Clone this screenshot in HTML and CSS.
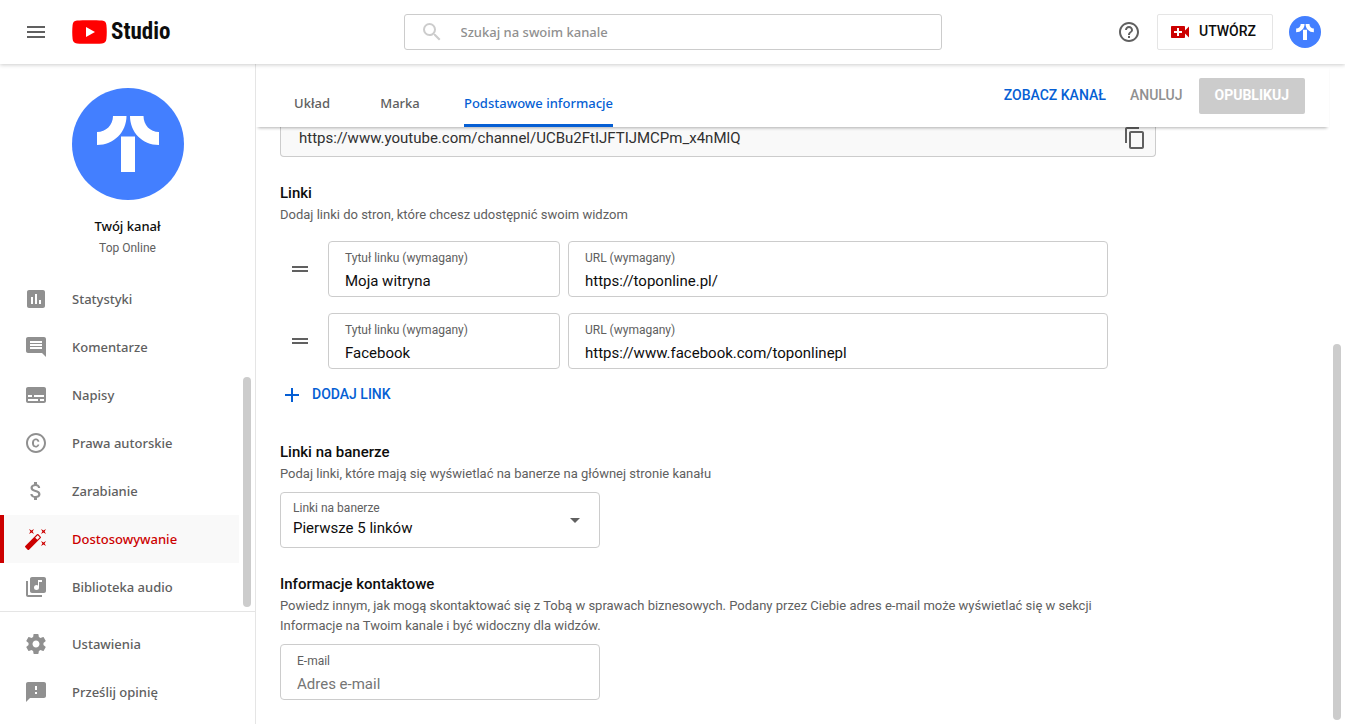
FILE: index.html
```html
<!DOCTYPE html>
<html lang="pl">
<head>
<meta charset="utf-8">
<meta name="viewport" content="width=device-width, initial-scale=1">
<title>Dostosowywanie kanału - YouTube Studio</title>
<link rel="stylesheet" href="styles.css">
</head>
<body>
<svg class="defs" aria-hidden="true">
  <symbol id="channel-logo" viewBox="0 0 112 112">
    <circle cx="56" cy="56" r="56" fill="#437fff"/>
    <path fill="#fff" d="M41 28h13.500C54.500 44 42 57 25 57V44C34 44 41 37 41 28zM58 28h13.500C71.500 37 78 44 87 44V57C70 57 58 44 58 28zM49 48.500h14V84H49z"/>
  </symbol>
</svg>

<header class="topbar">
  <div class="topbar-start">
    <button class="icon-button" type="button" aria-label="Menu">
      <svg class="icon" viewBox="0 0 24 24"><path d="M3 18h18v-2H3v2zm0-5h18v-2H3v2zm0-7v2h18V6H3z"/></svg>
    </button>
    <a class="brand" href="#" aria-label="YouTube Studio">
      <svg class="brand-mark" viewBox="0 0 35 24"><path fill="#f00" d="M5 .6C11 0 24 0 30 .6c3 .3 4.100 1.800 4.400 4.400.5 4.400.5 9.600 0 14-.3 2.600-1.400 4.100-4.400 4.400-6 .6-19 .6-25 0C2 23.100.9 21.600.6 19 .1 14.600.1 9.400.6 5 .9 2.400 2 .9 5 .6z"/><path fill="#fff" d="M14 7v10l9-5z"/></svg>
      <span class="brand-name">Studio</span>
    </a>
  </div>
  <form class="search">
    <svg class="icon" viewBox="0 0 24 24"><path d="M15.500 14h-.79l-.28-.27A6.470 6.470 0 0 0 16 9.500 6.500 6.500 0 1 0 9.500 16c1.610 0 3.090-.59 4.230-1.570l.27.28v.79l5 4.990L20.490 19l-4.990-5zm-6 0C7.010 14 5 11.990 5 9.500S7.010 5 9.500 5 14 7.010 14 9.500 11.990 14 9.500 14z"/></svg>
    <input type="search" aria-label="Szukaj na swoim kanale" placeholder="Szukaj na swoim kanale">
  </form>
  <div class="topbar-end">
    <button class="icon-button" type="button" aria-label="Pomoc">
      <svg class="icon" viewBox="0 0 24 24"><path d="M11 18h2v-2h-2v2zm1-16C6.480 2 2 6.480 2 12s4.480 10 10 10 10-4.480 10-10S17.520 2 12 2zm0 18c-4.410 0-8-3.590-8-8s3.590-8 8-8 8 3.590 8 8-3.590 8-8 8zm0-14c-2.210 0-4 1.790-4 4h2c0-1.100.9-2 2-2s2 .9 2 2c0 2-3 1.750-3 5h2c0-2.250 3-2.500 3-5 0-2.210-1.790-4-4-4z"/></svg>
    </button>
    <button class="create" type="button">
      <svg class="icon" viewBox="0 0 24 24"><path d="M17 10.500V7c0-.55-.45-1-1-1H4c-.55 0-1 .45-1 1v10c0 .55.450 1 1 1h12c.55 0 1-.45 1-1v-3.500l4 4v-11l-4 4zM14 13h-3v3H9v-3H6v-2h3V8h2v3h3v2z"/></svg>
      <span>UTWÓRZ</span>
    </button>
    <button class="icon-button" type="button" aria-label="Konto">
      <svg class="account"><use href="#channel-logo"/></svg>
    </button>
  </div>
</header>

<div class="layout">
  <aside class="sidebar">
    <div class="sidebar-scroll">
      <div class="channel">
        <svg class="channel-avatar" aria-hidden="true"><use href="#channel-logo"/></svg>
        <div class="channel-title">Twój kanał</div>
        <div class="channel-name">Top Online</div>
      </div>
      <nav class="menu" aria-label="Studio">
        <a class="menu-item" href="#"><svg class="icon" viewBox="0 0 24 24"><path d="M19 3H5c-1.100 0-2 .9-2 2v14c0 1.100.9 2 2 2h14c1.100 0 2-.9 2-2V5c0-1.100-.9-2-2-2zM9 17H7v-7h2v7zm4 0h-2V7h2v10zm4 0h-2v-4h2v4z"/></svg>Statystyki</a>
        <a class="menu-item" href="#"><svg class="icon" viewBox="0 0 24 24"><path d="M21.990 4c0-1.100-.89-2-1.990-2H4c-1.100 0-2 .9-2 2v12c0 1.100.9 2 2 2h14l4 4-.01-18zM18 14H6v-2h12v2zm0-3H6V9h12v2zm0-3H6V6h12v2z"/></svg>Komentarze</a>
        <a class="menu-item" href="#"><svg class="icon" viewBox="0 0 24 24"><path d="M20 4H4c-1.100 0-2 .9-2 2v12c0 1.100.9 2 2 2h16c1.100 0 2-.9 2-2V6c0-1.100-.9-2-2-2zM4 12h4v2H4v-2zm10 6H4v-2h10v2zm6 0h-4v-2h4v2zm0-4H10v-2h10v2z"/></svg>Napisy</a>
        <a class="menu-item" href="#"><svg class="icon" viewBox="0 0 24 24"><path d="M10.080 10.860c.05-.33.160-.62.300-.87s.34-.46.590-.62c.24-.15.540-.22.910-.23.230.010.440.050.630.130.2.090.380.210.520.360s.25.330.340.530.130.420.140.640h1.790c-.02-.47-.11-.9-.28-1.290s-.4-.73-.7-1.010-.66-.5-1.080-.66-.88-.23-1.390-.23c-.65 0-1.220.110-1.700.340s-.88.530-1.200.920-.56.840-.71 1.360S8 11.290 8 11.870v.27c0 .58.080 1.120.230 1.640s.39.970.710 1.350.72.690 1.200.910 1.050.340 1.700.340c.47 0 .91-.08 1.320-.23s.77-.36 1.080-.63.560-.58.740-.94.290-.74.300-1.150h-1.790c-.01.210-.06.400-.15.580s-.21.330-.36.460-.32.230-.52.300c-.19.070-.39.090-.6.100-.36-.01-.66-.08-.89-.23-.25-.16-.45-.37-.59-.62s-.25-.55-.3-.88-.08-.67-.08-1v-.27c0-.35.030-.68.080-1.010zM12 2C6.480 2 2 6.480 2 12s4.480 10 10 10 10-4.480 10-10S17.520 2 12 2zm0 18c-4.410 0-8-3.590-8-8s3.590-8 8-8 8 3.590 8 8-3.590 8-8 8z"/></svg>Prawa autorskie</a>
        <a class="menu-item" href="#"><svg class="icon" viewBox="0 0 24 24"><path d="M11.800 10.900c-2.270-.59-3-1.200-3-2.150 0-1.090 1.010-1.850 2.700-1.850 1.780 0 2.440.85 2.500 2.100h2.210c-.07-1.720-1.120-3.300-3.210-3.810V3h-3v2.160c-1.940.42-3.500 1.680-3.500 3.610 0 2.310 1.910 3.460 4.700 4.130 2.500.6 3 1.480 3 2.410 0 .69-.49 1.790-2.700 1.790-2.060 0-2.870-.92-2.980-2.100h-2.200c.12 2.190 1.760 3.420 3.680 3.830V21h3v-2.150c1.950-.37 3.500-1.500 3.500-3.550 0-2.840-2.430-3.810-4.700-4.400z"/></svg>Zarabianie</a>
        <a class="menu-item is-active" href="#" aria-current="page"><svg class="icon" viewBox="0 0 24 24"><path d="M7.500 5.600L10 7 8.600 4.500 10 2 7.500 3.400 5 2l1.400 2.500L5 7zm12 9.800L17 14l1.400 2.500L17 19l2.500-1.400L22 19l-1.400-2.500L22 14zM22 2l-2.500 1.400L17 2l1.400 2.500L17 7l2.500-1.400L22 7l-1.400-2.500zm-7.630 5.290a.996.996 0 0 0-1.410 0L1.290 18.960a.996.996 0 0 0 0 1.410l2.340 2.340c.39.390 1.020.390 1.410 0L16.700 11.050a.996.996 0 0 0 0-1.410l-2.330-2.350zm-1.030 5.490l-2.120-2.120 2.440-2.440 2.120 2.120-2.440 2.440z"/></svg>Dostosowywanie</a>
        <a class="menu-item" href="#"><svg class="icon" viewBox="0 0 24 24"><path d="M20 2H8c-1.100 0-2 .9-2 2v12c0 1.100.9 2 2 2h12c1.100 0 2-.9 2-2V4c0-1.100-.9-2-2-2zm-2 5h-3v5.500a2.500 2.500 0 1 1-2.500-2.500c.57 0 1.080.19 1.500.51V5h4v2zM4 6H2v14c0 1.100.9 2 2 2h14v-2H4V6z"/></svg>Biblioteka audio</a>
      </nav>
      <div class="thumb sidebar-thumb"></div>
    </div>
    <nav class="menu menu-footer" aria-label="Pomoc i ustawienia">
      <a class="menu-item" href="#"><svg class="icon" viewBox="0 0 24 24"><path d="M19.430 12.980c.04-.32.070-.64.070-.98s-.03-.66-.07-.98l2.110-1.650c.19-.15.240-.42.120-.64l-2-3.460c-.12-.22-.39-.3-.61-.22l-2.490 1c-.52-.4-1.080-.73-1.690-.98l-.38-2.650A.488.488 0 0 0 14 2h-4c-.25 0-.46.180-.49.420l-.38 2.650c-.61.250-1.170.590-1.690.980l-2.490-1c-.23-.09-.49 0-.61.220l-2 3.460c-.13.220-.07.490.12.640l2.110 1.650c-.04.320-.07.650-.07.980s.03.660.07.980l-2.110 1.650c-.19.150-.24.420-.12.640l2 3.460c.12.220.39.300.61.220l2.490-1c.52.400 1.080.730 1.690.980l.38 2.650c.03.240.24.420.49.420h4c.25 0 .46-.18.490-.42l.38-2.650c.61-.25 1.170-.59 1.690-.98l2.490 1c.23.090.49 0 .61-.22l2-3.460c.12-.22.070-.49-.12-.64l-2.110-1.650zM12 15.500c-1.930 0-3.500-1.570-3.500-3.500s1.570-3.500 3.500-3.500 3.500 1.570 3.500 3.500-1.570 3.500-3.500 3.500z"/></svg>Ustawienia</a>
      <a class="menu-item" href="#"><svg class="icon" viewBox="0 0 24 24"><path d="M20 2H4c-1.100 0-2 .9-2 2v18l4-4h14c1.100 0 2-.9 2-2V4c0-1.100-.9-2-2-2zm-7 12h-2v-2h2v2zm0-4h-2V6h2v4z"/></svg>Prześlij opinię</a>
    </nav>
  </aside>

  <main class="main">
    <div class="page-header">
      <nav class="tabs" aria-label="Sekcje">
        <a class="tab" href="#"><span>Układ</span></a>
        <a class="tab" href="#"><span>Marka</span></a>
        <a class="tab is-active" href="#" aria-current="page"><span>Podstawowe informacje</span></a>
      </nav>
      <div class="actions">
        <a class="action-link" href="#">ZOBACZ KANAŁ</a>
        <button class="cancel" type="button" disabled>ANULUJ</button>
        <button class="publish" type="button" disabled>OPUBLIKUJ</button>
      </div>
    </div>

    <form class="content">
      <div class="url-box">
        <input type="text" readonly aria-label="Adres URL kanału" value="https://www.youtube.com/channel/UCBu2FtIJFTIJMCPm_x4nMlQ">
        <button class="icon-button" type="button" aria-label="Kopiuj">
          <svg class="icon" viewBox="0 0 24 24"><path d="M16 1H4c-1.100 0-2 .9-2 2v14h2V3h12V1zm3 4H8c-1.100 0-2 .9-2 2v14c0 1.100.9 2 2 2h11c1.100 0 2-.9 2-2V7c0-1.100-.9-2-2-2zm0 16H8V7h11v14z"/></svg>
        </button>
      </div>

      <section class="section">
        <h2>Linki</h2>
        <p>Dodaj linki do stron, które chcesz udostępnić swoim widzom</p>
        <div class="links">
          <div class="link-row">
            <svg class="icon" viewBox="0 0 24 24"><path d="M20 9H4v2h16V9zM4 15h16v-2H4v2z"/></svg>
            <div class="field"><label for="title-1">Tytuł linku (wymagany)</label><input id="title-1" type="text" value="Moja witryna"></div>
            <div class="field"><label for="url-1">URL (wymagany)</label><input id="url-1" type="text" value="https://toponline.pl/"></div>
          </div>
          <div class="link-row">
            <svg class="icon" viewBox="0 0 24 24"><path d="M20 9H4v2h16V9zM4 15h16v-2H4v2z"/></svg>
            <div class="field"><label for="title-2">Tytuł linku (wymagany)</label><input id="title-2" type="text" value="Facebook"></div>
            <div class="field"><label for="url-2">URL (wymagany)</label><input id="url-2" type="text" value="https://www.facebook.com/toponlinepl"></div>
          </div>
        </div>
        <button class="add-link" type="button">
          <svg class="icon" viewBox="0 0 24 24"><path d="M19 13h-6v6h-2v-6H5v-2h6V5h2v6h6v2z"/></svg>
          <span>DODAJ LINK</span>
        </button>
      </section>

      <section class="section">
        <h2>Linki na banerze</h2>
        <p>Podaj linki, które mają się wyświetlać na banerze na głównej stronie kanału</p>
        <div class="field select-field">
          <label for="banner">Linki na banerze</label>
          <select id="banner"><option>Pierwsze 5 linków</option></select>
          <svg class="icon" viewBox="0 0 24 24"><path d="M7 10l5 5 5-5z"/></svg>
        </div>
      </section>

      <section class="section">
        <h2>Informacje kontaktowe</h2>
        <p>Powiedz innym, jak mogą skontaktować się z Tobą w sprawach biznesowych. Podany przez Ciebie adres e-mail może wyświetlać się w sekcji Informacje na Twoim kanale i być widoczny dla widzów.</p>
        <div class="field email-field"><label for="email">E-mail</label><input id="email" type="email" placeholder="Adres e-mail"></div>
      </section>
    </form>
    <div class="thumb main-thumb"></div>
  </main>
</div>
</body>
</html>
```
FILE: styles.css
```css
* { box-sizing: border-box; }

body {
  margin: 0;
  height: 100vh;
  display: flex;
  flex-direction: column;
  overflow: hidden;
  background: #fff;
  color: #0d0d0d;
  font: 14px/20px Roboto, sans-serif;
}

button, input, select {
  margin: 0;
  padding: 0;
  border: 0;
  outline: 0;
  background: none;
  color: inherit;
  font: inherit;
}

a { color: inherit; text-decoration: none; }

.defs { position: absolute; width: 0; height: 0; }

.icon {
  display: block;
  flex: none;
  width: 24px;
  height: 24px;
  fill: currentColor;
}

.icon-button { display: block; flex: none; color: #606060; }

/* Top bar */
.topbar {
  position: relative;
  z-index: 3;
  flex: none;
  display: grid;
  grid-template-columns: 1fr 40% 1fr;
  align-items: center;
  height: 64px;
  background: #fff;
  box-shadow: 0 1px 4px rgba(0, 0, 0, 0.2);
}

.topbar-start { display: flex; align-items: center; gap: 24px; padding-left: 24px; }

.brand { display: flex; align-items: center; gap: 4px; }
.brand-mark { width: 35px; height: 24px; }
.brand-name {
  font: bold 23px/32px "Liberation Sans Narrow", "Arial Narrow", "Roboto Condensed", "Open Sans Condensed", "Liberation Sans", sans-serif;
}

.search {
  display: flex;
  align-items: center;
  height: 36px;
  padding-left: 15px;
  gap: 17px;
  border: 1px solid #ccc;
  border-radius: 3px;
  color: #ccc;
}
.search input {
  flex: 1;
  min-width: 0;
  font: 500 13px/20px "Noto Sans", sans-serif;
  color: #0d0d0d;
}
.search input::placeholder { color: #909090; opacity: 1; }

.topbar-end {
  display: flex;
  align-items: center;
  justify-content: flex-end;
  gap: 16px;
  padding-right: 24px;
}
.account { display: block; width: 32px; height: 32px; }

.create {
  display: flex;
  align-items: center;
  gap: 7px;
  height: 36px;
  padding: 0 16px 0 10px;
  border: 1px solid #e5e5e5;
  border-radius: 2px;
  font-weight: 500;
}
.create .icon { color: #c00; }
.create span, .add-link span { padding-bottom: 2px; }

/* Sidebar */
.layout { flex: 1; display: flex; min-height: 0; }

.sidebar {
  flex: none;
  display: flex;
  flex-direction: column;
  width: 256px;
  border-right: 1px solid #e5e5e5;
}
.sidebar-scroll { position: relative; flex: 1; min-height: 0; overflow: hidden; }

.channel { padding: 24px 0 15px; text-align: center; }
.channel-avatar { display: block; width: 112px; height: 112px; margin: 0 auto 16px; }
.channel-title { font: 500 13px/20px "Noto Sans", sans-serif; }
.channel-name { font-size: 12px; line-height: 24px; color: #606060; }

.menu-item {
  display: flex;
  align-items: center;
  gap: 24px;
  height: 48px;
  margin-right: 16px;
  padding-left: 24px;
  color: #606060;
  font: 500 13px/20px "Noto Sans", sans-serif;
}
.menu-item .icon { color: #909090; }
.menu-item.is-active {
  padding-left: 20px;
  border-left: 4px solid #c00;
  background: #f9f9f9;
  color: #c00;
}
.menu-item.is-active .icon { color: #c00; }

.menu-footer { flex: none; padding: 8px 0; border-top: 1px solid #e5e5e5; }

.thumb {
  position: absolute;
  right: 4px;
  bottom: 4px;
  width: 8px;
  border-radius: 4px;
  background: #ccc;
}
.sidebar-thumb { height: 42%; }
.main-thumb { height: 57%; }

/* Page header */
.main {
  position: relative;
  flex: 1;
  min-width: 0;
  display: flex;
  flex-direction: column;
  overflow: hidden;
}

.page-header {
  position: relative;
  z-index: 2;
  flex: none;
  display: flex;
  justify-content: space-between;
  height: 63px;
  margin-right: 16px;
  padding: 0 24px 0 12px;
  background: #fff;
  box-shadow: 0 3px 3px -2px rgba(0, 0, 0, 0.3);
}

.tabs { display: flex; }
.tab {
  display: flex;
  justify-content: center;
  min-width: 88px;
  padding: 0 20px;
  color: #606060;
  font: 500 13px/20px "Noto Sans", sans-serif;
}
.tab span { padding-top: 29px; border-bottom: 3px solid transparent; }
.tab.is-active { color: #065fd4; }
.tab.is-active span { border-color: #065fd4; border-radius: 2px 2px 0 0; }

.actions { display: flex; align-items: center; font-weight: 500; }
.action-link { padding-bottom: 2px; color: #065fd4; }
.cancel { margin: 0 16px 0 24px; padding-bottom: 2px; color: #909090; }
.publish {
  height: 36px;
  padding: 0 16px 2px;
  border-radius: 2px;
  background: #ccc;
  color: #fff;
  font-weight: 700;
}

/* Form */
.content {
  flex: 1;
  min-height: 0;
  overflow: hidden;
  padding: 0 24px;
}

.url-box {
  display: flex;
  align-items: flex-end;
  max-width: 876px;
  height: 30px;
  padding: 0 8px 6px 18px;
  border: 1px solid #ccc;
  border-top: 0;
  border-radius: 0 0 4px 4px;
  background: #f9f9f9;
}
.url-box input { flex: 1; min-width: 0; height: 24px; font-size: 15px; color: #303030; }

.section { max-width: 828px; margin-top: 24px; }
.section h2 { margin: 0; font-size: 15px; line-height: 24px; font-weight: 500; }
.section p { margin: 0; font-size: 13px; line-height: 20px; color: #606060; }

.links { display: grid; gap: 16px; margin-top: 16px; }
.link-row {
  display: grid;
  grid-template-columns: 32px 232px 1fr;
  gap: 8px;
  align-items: center;
  padding-left: 8px;
}
.link-row .icon { color: #606060; }

.field {
  height: 56px;
  padding: 8px 16px;
  border: 1px solid #ccc;
  border-radius: 4px;
}
.field label { display: block; font-size: 12px; line-height: 16px; color: #606060; }
.field input { display: block; width: 100%; height: 20px; margin-top: 5px; font-size: 15px; }
.field input::placeholder { color: #757575; opacity: 1; }

.add-link {
  display: flex;
  align-items: center;
  gap: 8px;
  height: 36px;
  margin: 8px 0 27px;
  color: #065fd4;
  font-weight: 500;
}

.select-field, .email-field { width: 320px; margin-top: 8px; }
.select-field { position: relative; padding: 7px 12px; }
.select-field select {
  display: block;
  width: 100%;
  height: 24px;
  appearance: none;
  font-size: 15px;
}
.select-field .icon {
  position: absolute;
  right: 12px;
  top: 15px;
  color: #606060;
  pointer-events: none;
}
```
